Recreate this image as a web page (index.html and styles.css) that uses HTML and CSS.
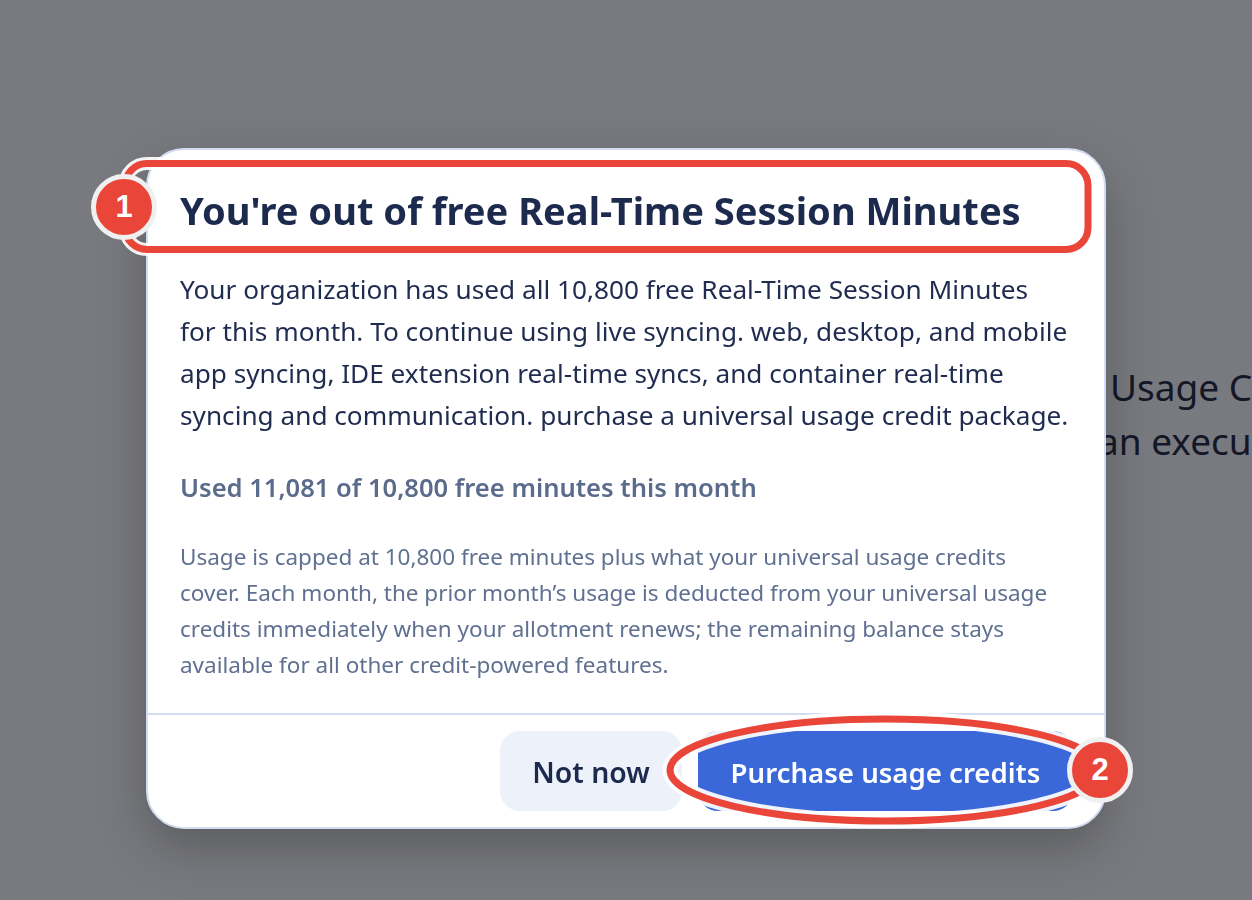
FILE: index.html
```html
<!DOCTYPE html>
<html lang="en">
<head>
    <meta charset="UTF-8">
    <meta name="viewport" content="width=device-width, initial-scale=1.0">
    <title>Real-Time Session Minutes</title>
    <link rel="stylesheet" href="styles.css">
</head>

<body>
    <main class="page">
        <p class="page-line page-line-first">Usage C</p>
        <p class="page-line page-line-second">an execu</p>
    </main>

    <div class="overlay">
        <div class="modal">
            <h2 class="modal-title">You're out of free Real-Time Session Minutes</h2>
            <div class="modal-body">
                <p class="intro">Your organization has used all 10,800 free Real-Time Session Minutes<br>for this month. To continue using live syncing. web, desktop, and mobile<br>app syncing, IDE extension real-time syncs, and container real-time<br>syncing and communication. purchase a universal usage credit package.</p>
                <p class="used">Used 11,081 of 10,800 free minutes this month</p>
                <p class="note">Usage is capped at 10,800 free minutes plus what your universal usage credits<br>cover. Each month, the prior month’s usage is deducted from your universal usage<br>credits immediately when your allotment renews; the remaining balance stays<br>available for all other credit-powered features.</p>
            </div>
            <div class="modal-footer">
                <button class="btn btn-light">Not now</button>
                <button class="btn btn-primary">Purchase usage credits</button>
            </div>
        </div>
    </div>

    <!-- Annotations drawn on top of the screenshot -->
    <svg class="marks" width="1252" height="900" viewBox="0 0 1252 900">
        <rect class="halo" x="125" y="163.5" width="963" height="86" rx="22"></rect>
        <rect class="ring" x="125" y="163.5" width="963" height="86" rx="22"></rect>
        <ellipse class="halo halo-wide" cx="885" cy="770" rx="215" ry="51"></ellipse>
        <ellipse class="ring" cx="885" cy="770" rx="215" ry="51"></ellipse>
    </svg>
    <div class="badge badge-one">1</div>
    <div class="badge badge-two">2</div>
</body>

</html>
```

FILE: styles.css
```css
* {
    box-sizing: border-box;
}

body {
    margin: 0;
    height: 900px;
    overflow: hidden;
    font-family: "Noto Sans", "Open Sans", sans-serif;
    background-color: #fff;
}

.page {
    height: 900px;
    padding-top: 360px;
    color: #1a2036;
    font-size: 37px;
}

.page-line {
    margin: 0;
    white-space: nowrap;
    line-height: 54px;
}

.page-line-first {
    margin-left: 1110px;
}

.page-line-second {
    margin-left: 1098px;
}

.overlay {
    position: fixed;
    inset: 0;
    display: flex;
    justify-content: center;
    align-items: flex-start;
    padding-top: 148px;
    background-color: rgba(16, 18, 26, 0.56);
}

.modal {
    width: 960px;
    background-color: #fff;
    border: 2px solid #d3dcf1;
    border-radius: 38px;
    box-shadow: 0 20px 50px rgba(0, 0, 0, 0.25);
}

.modal-title {
    margin: 0;
    padding: 30px 32px 28px;
    color: #1c2a4e;
    font-size: 38.1px;
    font-weight: 700;
    line-height: 60px;
    white-space: nowrap;
}

.modal-body {
    padding: 0 32px 30px;
    border-bottom: 2px solid #d3dcf1;
}

.intro {
    margin: 0 0 30px;
    color: #1f2b4f;
    font-size: 26.2px;
    line-height: 42px;
    white-space: nowrap;
}

.used {
    margin: 0 0 31px;
    color: #5a6b8c;
    font-size: 25.55px;
    font-weight: 600;
    line-height: 42px;
    white-space: nowrap;
}

.note {
    margin: 0;
    color: #5f7091;
    font-size: 22.5px;
    line-height: 36px;
    white-space: nowrap;
}

.modal-footer {
    display: flex;
    justify-content: flex-end;
    gap: 16px;
    padding: 16px 31px 16px 32px;
}

.btn {
    height: 80px;
    padding-top: 3px;
    border: none;
    border-radius: 20px;
    font-family: inherit;
    font-weight: 600;
}

.btn-light {
    width: 182px;
    background-color: #edf1fa;
    color: #1c2a4e;
    font-size: 28.4px;
}

.btn-primary {
    width: 375px;
    background-color: #3b68d8;
    color: #fff;
    font-size: 27.6px;
}

.marks {
    position: fixed;
    top: 0;
    left: 0;
}

.halo,
.ring {
    fill: none;
}

.halo {
    stroke: rgba(255, 255, 255, 0.92);
    stroke-width: 13;
}

.halo-wide {
    stroke-width: 15;
}

.ring {
    stroke: #ea4539;
    stroke-width: 7;
}

.badge {
    position: fixed;
    width: 66px;
    height: 66px;
    border: 5px solid #f0f0f0;
    border-radius: 50%;
    background-color: #ea4539;
    color: #fff;
    font-family: "Liberation Sans", Arial, sans-serif;
    font-size: 31px;
    font-weight: 700;
    line-height: 56px;
    text-align: center;
}

.badge-one {
    left: 91px;
    top: 174px;
}

.badge-two {
    left: 1067px;
    top: 737px;
}
```
